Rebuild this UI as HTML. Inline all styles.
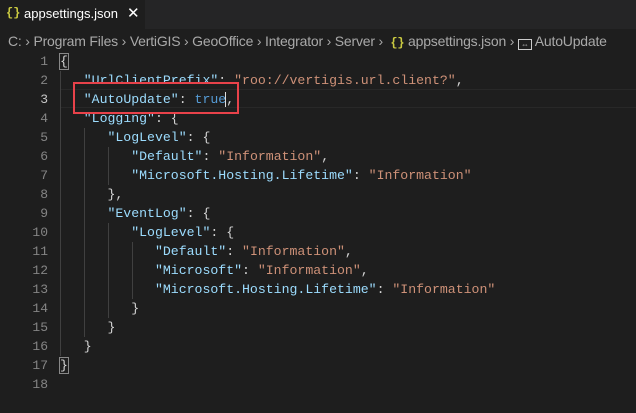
<!DOCTYPE html>
<html><head><style>
body{margin:0;width:636px;height:413px;background:#1e1e1e;overflow:hidden;font-family:"Liberation Sans",sans-serif;position:relative}
.tabbar{position:absolute;left:0;top:0;width:636px;height:29px;background:#252526}
.tab{position:absolute;left:0;top:0;width:145px;height:29px;background:#1e1e1e;color:#fff;font-size:13px}
.tab .ic{position:absolute;left:6px;top:6px;color:#cbcb41;font-weight:bold;font-size:12px;font-family:"Liberation Mono",monospace}
.tab .nm{position:absolute;left:24px;top:6px}
.tab .x{position:absolute;left:127px;top:4px;font-size:15px}
.bc{position:absolute;left:8px;top:33px;font-size:14px;color:#a9a9a9;white-space:pre;letter-spacing:-0.2px}
.bc .j{color:#cbcb41;font-weight:bold;font-family:"Liberation Mono",monospace;font-size:12px}
.ln{position:absolute;left:0;width:48px;text-align:right;color:#858585;font-family:"Liberation Mono",monospace;font-size:13px;line-height:19px}
.code{position:absolute;left:60px;font-family:"Liberation Mono",monospace;font-size:13.2px;line-height:19px;white-space:pre;color:#d4d4d4}
.k{color:#9cdcfe}.s{color:#ce9178}.b{color:#569cd6}
.cur{position:absolute;left:60px;top:89px;width:576px;height:17px;border-top:1px solid #282828;border-bottom:1px solid #282828}
.g{position:absolute;width:1px;background:#404040}
.red{position:absolute;left:73px;top:82px;width:162px;height:28px;border:2px solid #e8424a}
</style></head><body>
<div class="tabbar"><div class="tab"><span class="ic">{}</span><span class="nm">appsettings.json</span><span class="x">✕</span></div></div>
<div class="bc">C: › Program Files › VertiGIS › GeoOffice › Integrator › Server ›  <span class="j">{}</span> appsettings.json › <span style="display:inline-block;width:12px;height:9px;border:1px solid #ccc;vertical-align:-1px;font-size:8px;line-height:9px;text-align:center;color:#ccc">⇔</span> AutoUpdate</div>
<div class="cur"></div>
<div class="g" style="left:60px;top:71px;height:285px"></div>
<div class="g" style="left:84px;top:128px;height:209px"></div>
<div class="g" style="left:108px;top:147px;height:38px"></div>
<div class="g" style="left:108px;top:223px;height:95px"></div>
<div class="g" style="left:132px;top:242px;height:57px"></div>
<div class="ln" style="top:52px">1<br>2<br><span style="color:#c6c6c6">3</span><br>4<br>5<br>6<br>7<br>8<br>9<br>10<br>11<br>12<br>13<br>14<br>15<br>16<br>17<br>18</div>
<div class="code" style="top:52px"><span style="outline:1px solid #888">{</span>
   <span class="k">"UrlClientPrefix"</span>: <span class="s">"roo://vertigis.url.client?"</span>,
   <span class="k">"AutoUpdate"</span>: <span class="b">true</span><span style="border-left:1px solid #ddd;margin-left:-1px"></span>,
   <span class="k">"Logging"</span>: {
      <span class="k">"LogLevel"</span>: {
         <span class="k">"Default"</span>: <span class="s">"Information"</span>,
         <span class="k">"Microsoft.Hosting.Lifetime"</span>: <span class="s">"Information"</span>
      },
      <span class="k">"EventLog"</span>: {
         <span class="k">"LogLevel"</span>: {
            <span class="k">"Default"</span>: <span class="s">"Information"</span>,
            <span class="k">"Microsoft"</span>: <span class="s">"Information"</span>,
            <span class="k">"Microsoft.Hosting.Lifetime"</span>: <span class="s">"Information"</span>
         }
      }
   }
<span style="outline:1px solid #888">}</span>
</div>
<div class="red"></div>
</body></html>
